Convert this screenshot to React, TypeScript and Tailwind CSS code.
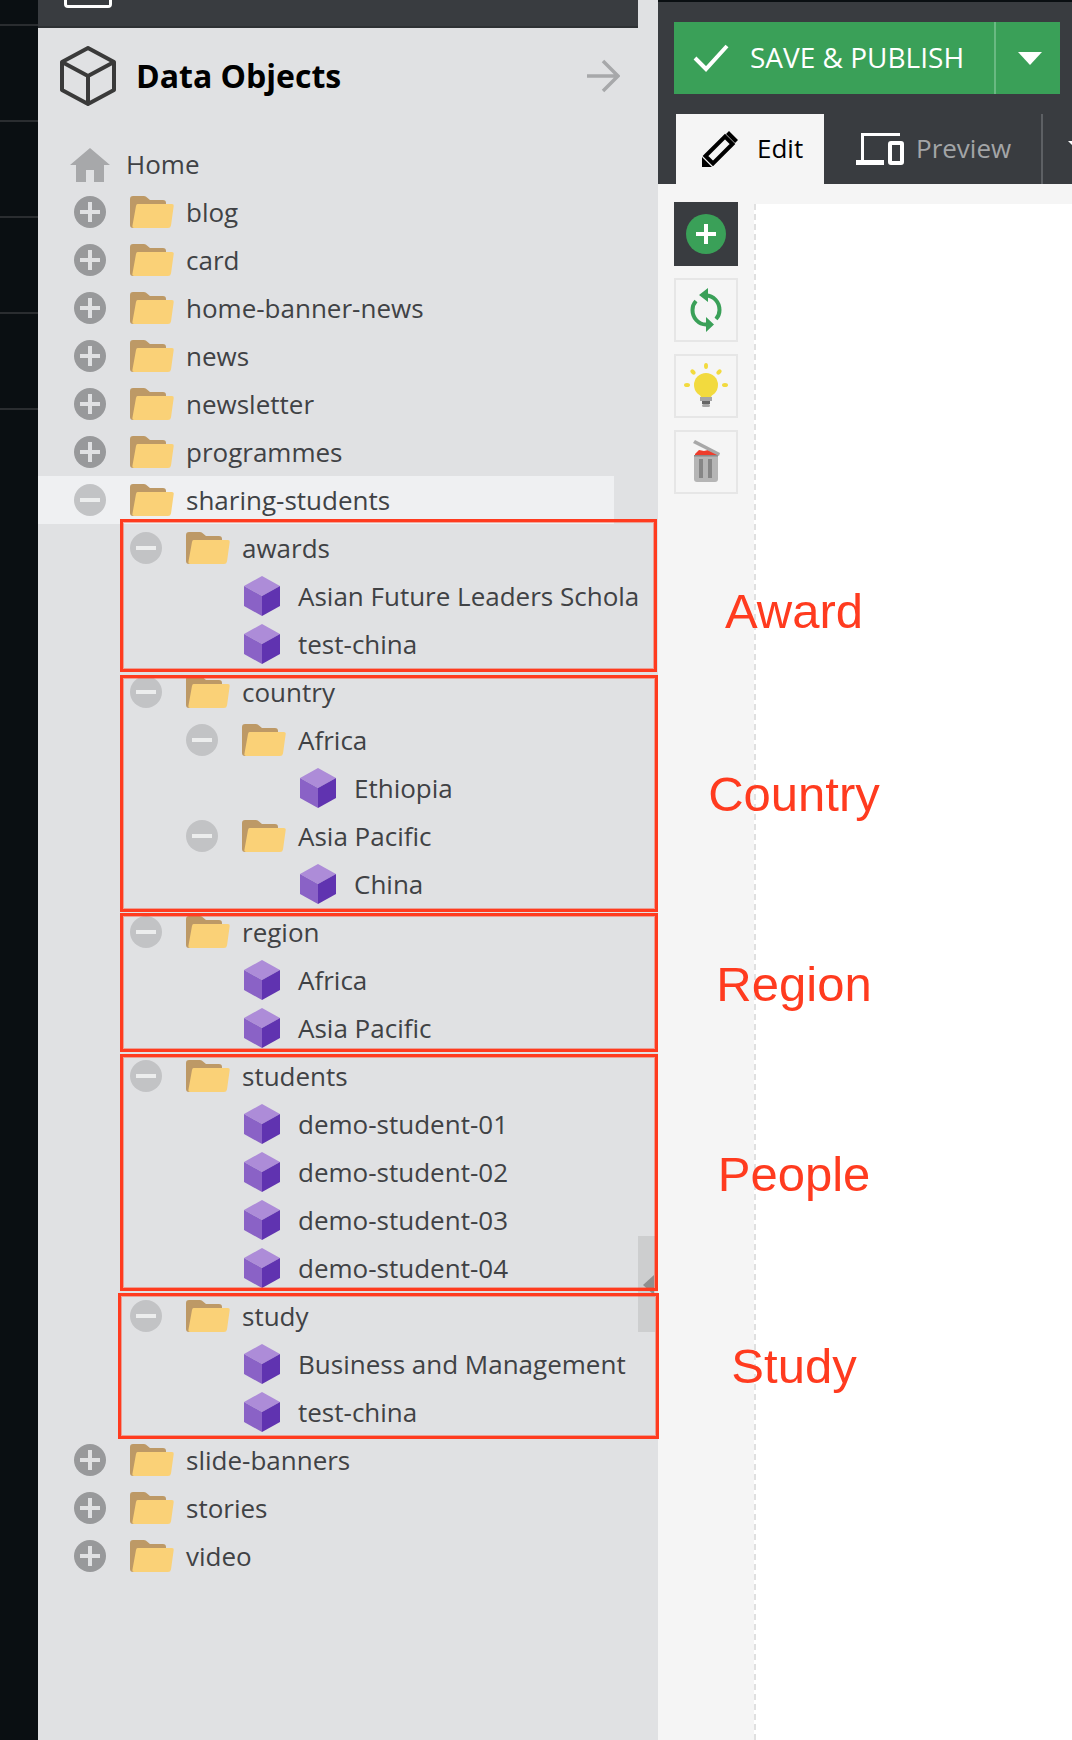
import React from "react";

type Row = {
  label: string;
  level: number;
  kind: "plus" | "minus" | "leaf";
  active?: boolean;
};

const rows: Row[] = [
  { label: "blog", level: 0, kind: "plus" },
  { label: "card", level: 0, kind: "plus" },
  { label: "home-banner-news", level: 0, kind: "plus" },
  { label: "news", level: 0, kind: "plus" },
  { label: "newsletter", level: 0, kind: "plus" },
  { label: "programmes", level: 0, kind: "plus" },
  { label: "sharing-students", level: 0, kind: "minus", active: true },
  { label: "awards", level: 1, kind: "minus" },
  { label: "Asian Future Leaders Schola", level: 2, kind: "leaf" },
  { label: "test-china", level: 2, kind: "leaf" },
  { label: "country", level: 1, kind: "minus" },
  { label: "Africa", level: 2, kind: "minus" },
  { label: "Ethiopia", level: 3, kind: "leaf" },
  { label: "Asia Pacific", level: 2, kind: "minus" },
  { label: "China", level: 3, kind: "leaf" },
  { label: "region", level: 1, kind: "minus" },
  { label: "Africa", level: 2, kind: "leaf" },
  { label: "Asia Pacific", level: 2, kind: "leaf" },
  { label: "students", level: 1, kind: "minus" },
  { label: "demo-student-01", level: 2, kind: "leaf" },
  { label: "demo-student-02", level: 2, kind: "leaf" },
  { label: "demo-student-03", level: 2, kind: "leaf" },
  { label: "demo-student-04", level: 2, kind: "leaf" },
  { label: "study", level: 1, kind: "minus" },
  { label: "Business and Management", level: 2, kind: "leaf" },
  { label: "test-china", level: 2, kind: "leaf" },
  { label: "slide-banners", level: 0, kind: "plus" },
  { label: "stories", level: 0, kind: "plus" },
  { label: "video", level: 0, kind: "plus" },
];

const levelPadding = ["pl-[36px]", "pl-[92px]", "pl-[148px]", "pl-[204px]"];

// red annotation boxes drawn on top of the tree
const boxes = [
  "left-[120px] top-[519px] w-[537px] h-[153px]",
  "left-[120px] top-[675px] w-[538px] h-[237px]",
  "left-[120px] top-[913px] w-[538px] h-[139px]",
  "left-[120px] top-[1054px] w-[538px] h-[237px]",
  "left-[118px] top-[1293px] w-[541px] h-[146px]",
];

const notes = [
  { text: "Award", pos: "top-[575px]" },
  { text: "Country", pos: "top-[758px]" },
  { text: "Region", pos: "top-[948px]" },
  { text: "People", pos: "top-[1138px]" },
  { text: "Study", pos: "top-[1330px]" },
];

const Folder = () => (
  <svg width="44" height="32" viewBox="0 0 44 32">
    <path d="M0 3Q0 0 3 0H14Q16 0 17 1.500L20 4H33Q36 4 36 7V10L6 32H3Q0 32 0 29Z" fill="#bd9966" />
    <path d="M7.500 8H42Q44 8 43.700 10L41 29.500Q40.500 32 38 32H4Q2 32 2.400 30L6 10Q6.400 8 7.500 8Z" fill="#fad177" />
  </svg>
);

const Cube = () => (
  <svg width="36" height="40" viewBox="0 0 36 40" className="ml-[2px]">
    <polygon points="18,0 36,10 18,20 0,10" fill="#ad8cd8" />
    <polygon points="0,10 18,20 18,40 0,30" fill="#8a62c6" />
    <polygon points="36,10 18,20 18,40 36,30" fill="#6033b0" />
  </svg>
);

const Toggle = ({ kind }: { kind: "plus" | "minus" }) => (
  <div
    className={`w-8 h-8 rounded-full flex items-center justify-center relative shrink-0 ${
      kind === "plus" ? "bg-[#98999b]" : "bg-[#c2c3c5]"
    }`}
  >
    <div className={`w-5 h-1 ${kind === "plus" ? "bg-[#e0e1e3]" : "bg-[#eceded]"}`} />
    {kind === "plus" && <div className="absolute w-1 h-5 bg-[#e0e1e3]" />}
  </div>
);

const TreeRow = ({ row }: { row: Row }) => (
  <div
    className={`h-12 flex items-center whitespace-nowrap ${levelPadding[row.level]} ${
      row.active ? "bg-[#eff0f2] w-[576px]" : "w-[602px]"
    }`}
  >
    {row.kind === "leaf" ? <div className="w-8 shrink-0" /> : <Toggle kind={row.kind} />}
    <div className="w-[44px] ml-6 shrink-0">{row.kind === "leaf" ? <Cube /> : <Folder />}</div>
    <span className="ml-3 text-[26px] text-[#404245]">{row.label}</span>
  </div>
);

const ToolButton = ({ children, dark }: { children: React.ReactNode; dark?: boolean }) => (
  <div
    className={`w-16 h-16 flex items-center justify-center ${
      dark ? "bg-[#393c40]" : "border-2 border-[#e6e6e6]"
    }`}
  >
    {children}
  </div>
);

export default function App() {
  return (
    <div className="relative w-[1072px] h-[1740px] overflow-hidden flex font-['Open_Sans',sans-serif] bg-white">
      {/* dark rail */}
      <div className="w-[38px] shrink-0 bg-[#0a0f12] pt-6 flex flex-col gap-[94px]">
        {[0, 1, 2, 3, 4].map((i) => (
          <div key={i} className="h-[2px] bg-[#2a2d30]" />
        ))}
      </div>

      {/* data objects panel */}
      <div className="w-[620px] shrink-0 bg-[#e0e1e3] flex flex-col">
        <div className="w-[600px] h-[28px] bg-[#393c40] border-b-2 border-[#2e3134] pl-[26px]">
          <div className="w-[48px] h-[8px] border-x-[3px] border-b-[3px] border-white rounded-b-[4px]" />
        </div>
        <div className="h-[112px] flex items-center pl-[22px] pr-[38px] pb-[16px]">
          <svg width="56" height="60" viewBox="0 0 56 60" fill="none" stroke="#3a3a3a" strokeWidth="4" strokeLinejoin="round">
            <path d="M28 2L54 16V44L28 58L2 44V16Z" />
            <path d="M2 16L28 30L54 16M28 30V58" />
          </svg>
          <span className="ml-[20px] text-[32px] font-bold text-black">Data Objects</span>
          <svg className="ml-auto" width="34" height="34" viewBox="0 0 34 34" fill="none" stroke="#a7a8aa" strokeWidth="3.500">
            <path d="M1 17H31M17 2L32 17L17 32" />
          </svg>
        </div>
        <div className="h-12 flex items-center pl-[32px] w-[602px]">
          <svg width="40" height="34" viewBox="0 0 40 34" className="mt-[2px]">
            <path d="M20 0L40 17H34V34H24V22H16V34H6V17H0Z" fill="#a7a8aa" />
          </svg>
          <span className="ml-[16px] text-[26px] text-[#404245]">Home</span>
        </div>
        <div className="w-[602px] overflow-hidden">
          {rows.map((row, index) => (
            <TreeRow key={index} row={row} />
          ))}
        </div>
      </div>

      {/* editor side */}
      <div className="flex-1 flex flex-col bg-[#f5f5f5]">
        <div className="h-[184px] bg-[#393c40] border-t-2 border-[#0a0f12] pt-5 pl-4 shrink-0">
          <div className="w-[386px] h-[72px] bg-[#3aa058] flex items-center text-white">
            <svg className="ml-[19px]" width="36" height="28" viewBox="0 0 36 28" fill="none" stroke="white" strokeWidth="4">
              <path d="M2 14L13 25L34 2" />
            </svg>
            <span className="ml-[21px] text-[28px] whitespace-nowrap mb-[2px]">SAVE &amp; PUBLISH</span>
            <div className="ml-auto w-[66px] h-full border-l-2 border-[#69b982] flex items-center justify-center pl-[3px]">
              <div className="w-0 h-0 border-x-[12px] border-x-transparent border-t-[13px] border-t-white" />
            </div>
          </div>
          <div className="flex items-end h-[70px] mt-[20px] ml-[2px]">
            <div className="w-[148px] h-[70px] bg-[#f5f5f5] flex items-center pl-[26px]">
              <svg width="36" height="36" viewBox="0 0 36 36">
                <path d="M3.500 25L23 5.500L30.500 13L11 32.500Z" fill="#f5f5f5" stroke="black" strokeWidth="4" />
                <path d="M0 36V26L10 36Z M24 3L27 0L36 9L33 12Z" fill="black" />
              </svg>
              <span className="ml-[19px] mb-[2px] text-[26px] text-black">Edit</span>
            </div>
            <div className="w-[219px] h-[70px] flex items-center pl-8 border-r-2 border-[#5d6064]">
              <svg width="48" height="32" viewBox="0 0 48 32" fill="none" stroke="white" strokeWidth="3">
                <path d="M44 1.500H6.500V27" />
                <rect x="0" y="27" width="28" height="5" fill="white" stroke="none" />
                <rect x="34" y="10" width="12" height="20" rx="1" strokeWidth="4" />
              </svg>
              <span className="ml-[12px] mb-[2px] text-[26px] text-[#a3a5a7]">Preview</span>
            </div>
            <div className="ml-[25px] mb-[36px] w-0 h-0 border-x-[7px] border-x-transparent border-t-[7px] border-t-white" />
          </div>
        </div>
        <div className="flex-1 flex pl-4">
          <div className="w-16 pt-[18px] flex flex-col gap-3 shrink-0">
            <ToolButton dark>
              <div className="relative w-10 h-10 rounded-full bg-[#3aa058] flex items-center justify-center">
                <div className="w-5 h-1 bg-white" />
                <div className="absolute w-1 h-5 bg-white" />
              </div>
            </ToolButton>
            <ToolButton>
              <svg width="32" height="44" viewBox="0 0 32 44" fill="none">
                <path d="M16 7.500A13.500 14.500 0 0 1 29.500 22A13 13 0 0 1 26 31" stroke="#3aa058" strokeWidth="4" />
                <path d="M16 36.500A13.500 14.500 0 0 1 2.500 22A13 13 0 0 1 6 13" stroke="#3aa058" strokeWidth="4" />
                <path d="M18 0V14L9 7Z M16 29V44L24 36.500Z" fill="#3aa058" />
              </svg>
            </ToolButton>
            <ToolButton>
              <svg width="44" height="46" viewBox="0 0 44 46">
                <circle cx="22" cy="22" r="12" fill="#f2da3e" />
                <path d="M16 30H28L27 35H17Z" fill="#f2da3e" />
                <rect x="16" y="34" width="12" height="4" fill="#a5a5a5" />
                <rect x="18" y="38" width="8" height="3" fill="#666" />
                <rect x="18" y="41" width="8" height="3" rx="1.500" fill="#a5a5a5" />
                <ellipse cx="22" cy="3" rx="2" ry="3" fill="#f2da3e" />
                <ellipse cx="3" cy="22" rx="3" ry="2" fill="#f2da3e" />
                <ellipse cx="41" cy="22" rx="3" ry="2" fill="#f2da3e" />
                <ellipse cx="9" cy="9" rx="3" ry="2" fill="#f2da3e" transform="rotate(45 9 9)" />
                <ellipse cx="35" cy="9" rx="3" ry="2" fill="#f2da3e" transform="rotate(-45 35 9)" />
              </svg>
            </ToolButton>
            <ToolButton>
              <svg width="28" height="42" viewBox="0 0 28 42" className="mb-[3px]">
                <path d="M3 14L7 10L12 11L16 10L21 12L26 14V17H3Z" fill="#ee3d2c" />
                <path d="M2 15H26V39Q26 42 23 42H5Q2 42 2 39Z" fill="#b5b5b5" />
                <rect x="2" y="15" width="24" height="1.500" fill="#8a8a8a" />
                <rect x="7" y="19" width="4" height="19" fill="#868686" />
                <rect x="16" y="19" width="4" height="19" fill="#868686" />
                <path d="M1 3L3 0L28 13L27 16Z" fill="#a8a8a8" />
              </svg>
            </ToolButton>
          </div>
          <div className="flex-1 mt-5 ml-4 bg-white border-l-2 border-dashed border-[#e0e0e0]" />
        </div>
      </div>

      {/* scroll handle */}
      <div className="absolute left-[638px] top-[1236px] w-[17px] h-[96px] bg-[#cdcecf]" />
      <div className="absolute left-[643px] top-[1275px] w-0 h-0 border-y-[10px] border-y-transparent border-r-[11px] border-r-[#8f8f8f]" />

      {/* annotations */}
      {boxes.map((pos, index) => (
        <div
          key={index}
          className={`absolute border-[3px] border-[#ff3b1f] shadow-[inset_0_0_0_1px_rgba(255,59,31,0.4)] ${pos}`}
        />
      ))}
      {notes.map((note) => (
        <div
          key={note.text}
          className={`absolute left-[694px] w-[200px] text-center text-[49px] text-[#ff3b1f] font-['Liberation_Sans',sans-serif] ${note.pos}`}
        >
          {note.text}
        </div>
      ))}
    </div>
  );
}
